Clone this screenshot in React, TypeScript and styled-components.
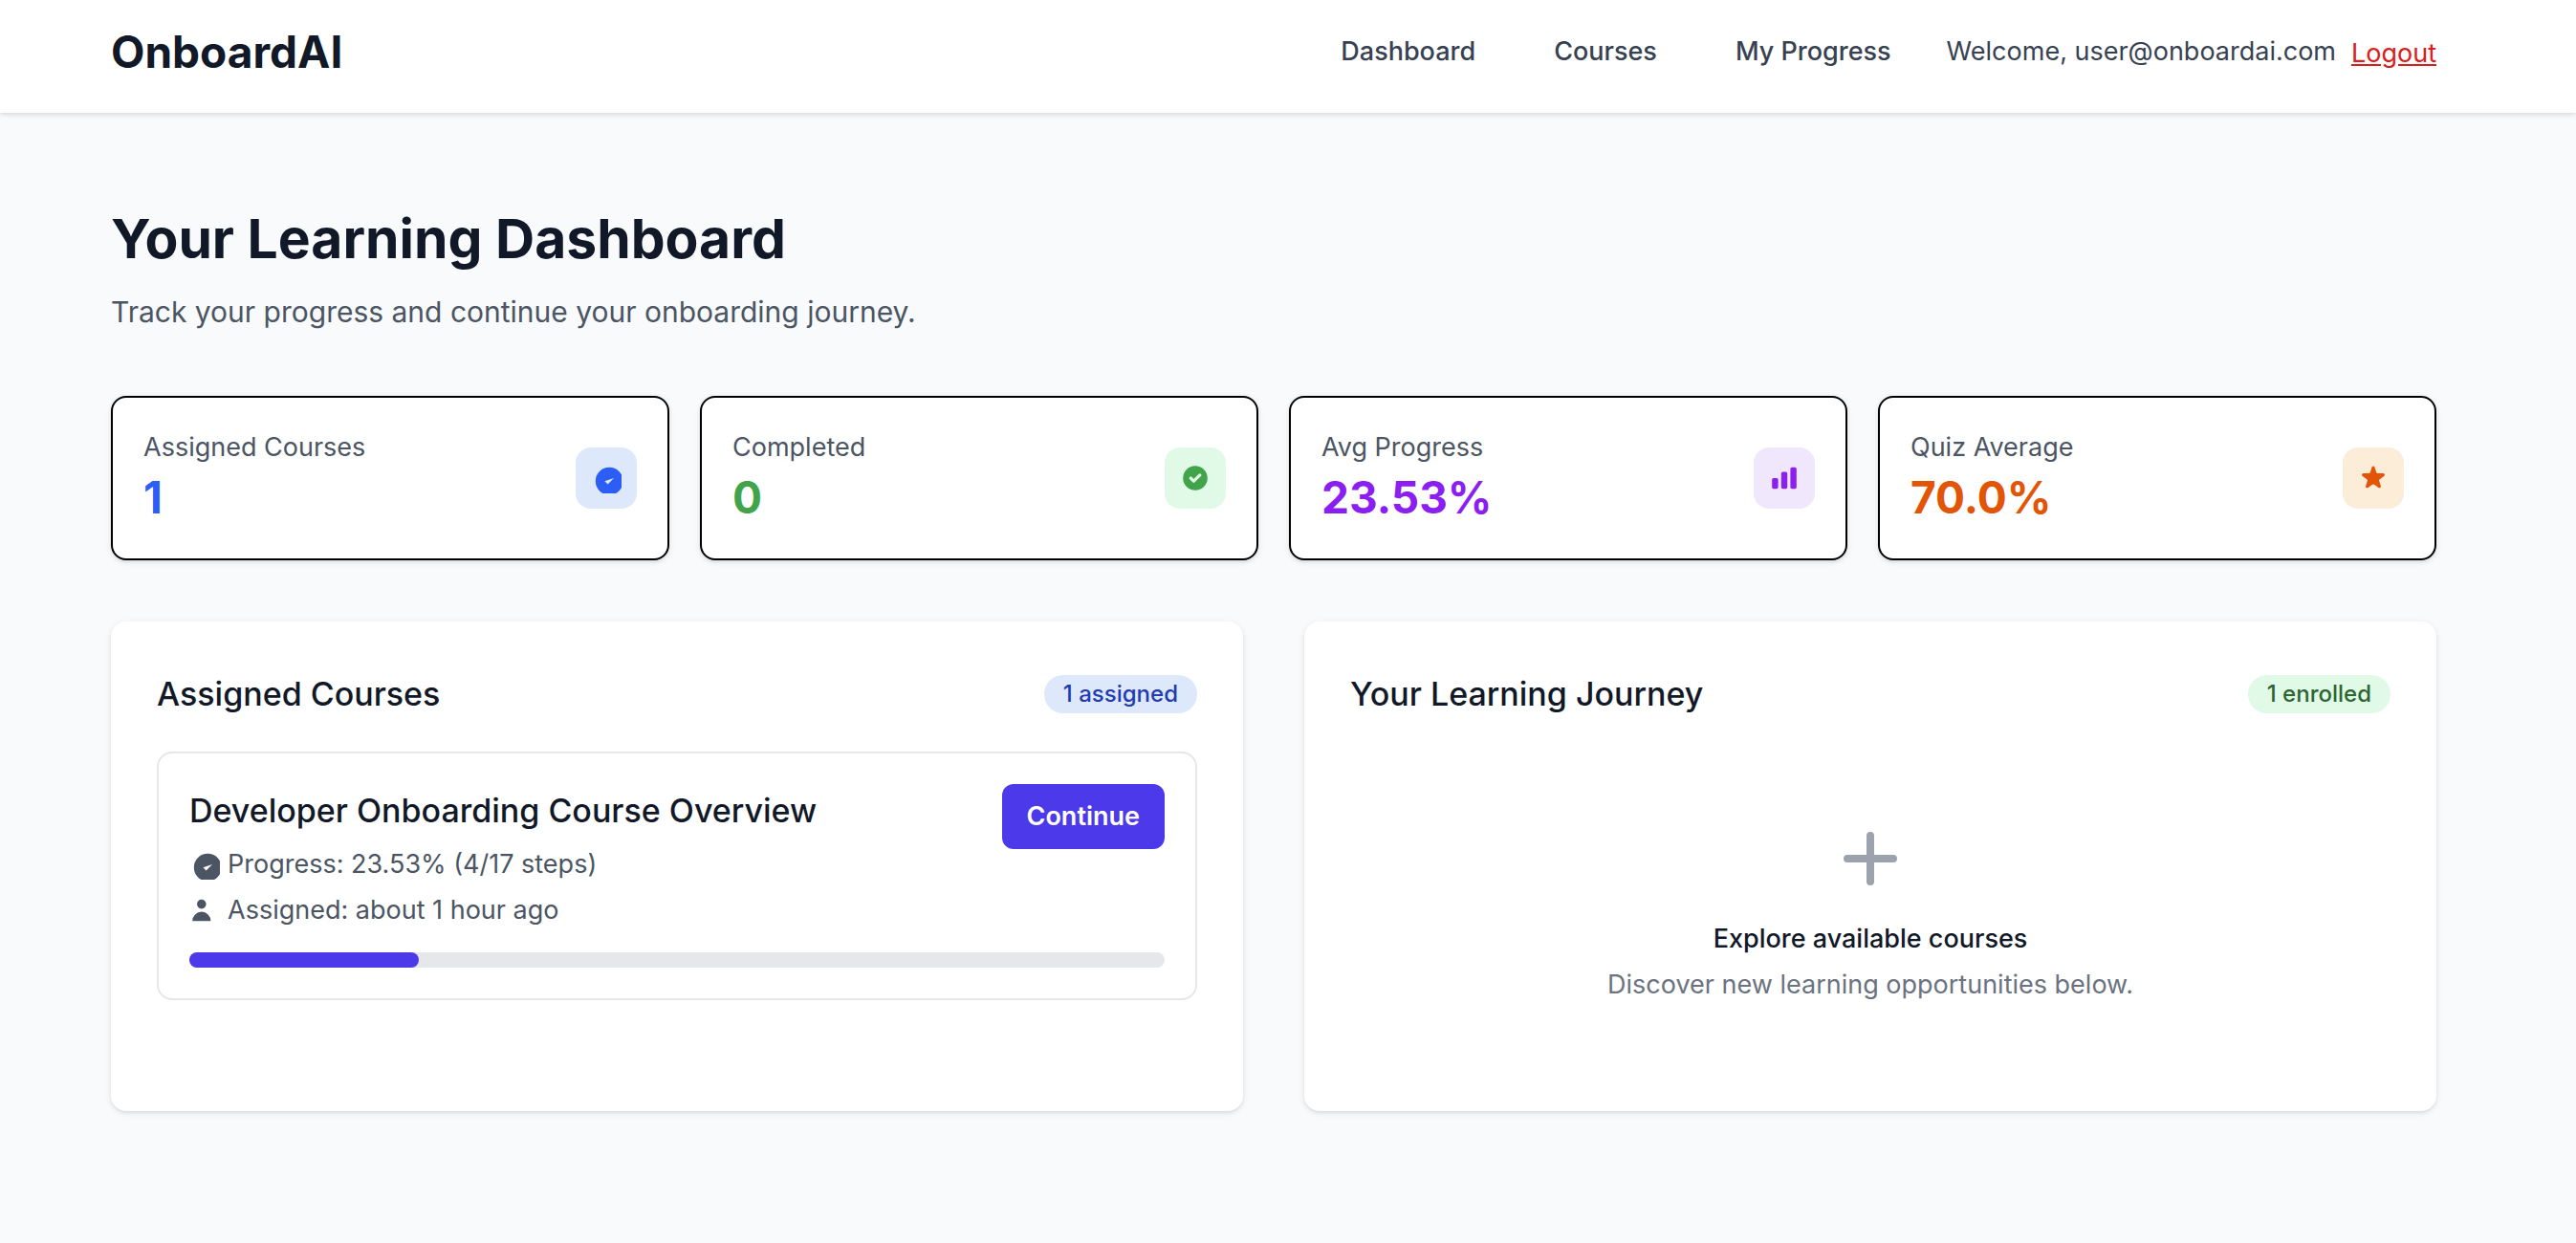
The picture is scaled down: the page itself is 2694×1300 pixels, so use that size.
import React from "react";
import styled, { createGlobalStyle } from "styled-components";

const font = `Inter, "Noto Sans", "Liberation Sans", sans-serif`;

const GlobalStyle = createGlobalStyle`
  *, *::before, *::after { box-sizing: border-box; }
  body {
    margin: 0;
    background: #f9fafc;
    color: #111827;
    font-family: ${font};
    font-size: 27px;
    line-height: 40px;
  }
  h1, h2, h3, p { margin: 0; }
  svg { display: block; flex-shrink: 0; }
`;

const Page = styled.div`
  min-height: 100vh;
`;

const Header = styled.header`
  background: #ffffff;
  padding: 22px 30px 32px 0;
  box-shadow: 0 2px 6px rgba(0, 0, 0, 0.1), 0 2px 4px -2px rgba(0, 0, 0, 0.1);
`;

const Container = styled.div`
  max-width: 2560px;
  margin: 0 auto;
  padding: 0 64px;
`;

const HeaderRow = styled(Container)`
  display: flex;
  align-items: center;
  justify-content: space-between;
`;

const Logo = styled.a`
  color: #111827;
  font-size: 46px;
  font-weight: 700;
  line-height: 64px;
  text-decoration: none;
`;

const HeaderRight = styled.div`
  display: flex;
  align-items: center;
`;

const Nav = styled.nav`
  display: flex;
  gap: 82px;
  margin-right: 58px;
`;

const NavLink = styled.a`
  color: #374151;
  font-weight: 500;
  text-decoration: none;
`;

const Welcome = styled.span`
  color: #374151;
`;

const Logout = styled.button`
  margin: 4px 0 0 16px;
  padding: 0;
  border: 0;
  background: none;
  color: #d8201c;
  font: inherit;
  text-decoration: underline;
  cursor: pointer;
`;

const Main = styled.main`
  padding: 96px 30px 96px 0;
`;

const Title = styled.h1`
  font-size: 57px;
  font-weight: 700;
  line-height: 72px;
`;

const Subtitle = styled.p`
  margin-top: 16px;
  color: #4b5563;
  font-size: 30px;
  line-height: 48px;
`;

const Stats = styled.section`
  display: grid;
  grid-template-columns: repeat(4, 1fr);
  gap: 32px;
  margin-top: 64px;
`;

const StatCard = styled.div`
  display: flex;
  align-items: center;
  justify-content: space-between;
  padding: 32px;
  border: 2px solid #000000;
  border-radius: 16px;
  background: #ffffff;
  box-shadow: 0 2px 6px rgba(0, 0, 0, 0.1), 0 2px 4px -2px rgba(0, 0, 0, 0.1);
`;

const StatLabel = styled.p`
  color: #4b5563;
`;

const StatValue = styled.p<{ $color: string }>`
  color: ${(p) => p.$color};
  font-size: 46px;
  font-weight: 700;
  line-height: 64px;
`;

const IconTile = styled.div<{ $color: string; $tint: string }>`
  padding: 16px;
  border-radius: 16px;
  background: ${(p) => p.$tint};
  color: ${(p) => p.$color};
`;

const Panels = styled.div`
  display: grid;
  grid-template-columns: repeat(2, 1fr);
  gap: 64px;
  margin-top: 64px;
`;

const Panel = styled.section`
  padding: 48px;
  border-radius: 16px;
  background: #ffffff;
  box-shadow: 0 2px 6px rgba(0, 0, 0, 0.1), 0 2px 4px -2px rgba(0, 0, 0, 0.1);
`;

const PanelHeader = styled.div`
  display: flex;
  align-items: center;
  justify-content: space-between;
  margin-bottom: 32px;
`;

const PanelTitle = styled.h2`
  font-size: 34px;
  font-weight: 500;
  line-height: 56px;
`;

const Badge = styled.span<{ $color: string; $tint: string }>`
  padding: 4px 20px;
  border-radius: 20px;
  background: ${(p) => p.$tint};
  color: ${(p) => p.$color};
  font-size: 24px;
  font-weight: 500;
  line-height: 32px;
`;

const CourseCard = styled.article`
  padding: 32px;
  border: 2px solid #e5e7eb;
  border-radius: 16px;
`;

const CourseTop = styled.div`
  display: flex;
  align-items: flex-start;
  justify-content: space-between;
`;

const CourseTitle = styled.h3`
  font-size: 34px;
  font-weight: 500;
  line-height: 56px;
`;

const Meta = styled.p`
  display: flex;
  align-items: center;
  gap: 8px;
  margin-top: 8px;
  color: #4b5563;
`;

const ContinueButton = styled.button`
  padding: 14px 26px;
  border: 0;
  border-radius: 12px;
  background: #4b39ea;
  color: #ffffff;
  font: inherit;
  font-weight: 600;
  cursor: pointer;
`;

const Track = styled.div`
  height: 16px;
  margin-top: 24px;
  border-radius: 8px;
  background: #e5e7eb;
`;

const Fill = styled.div`
  height: 100%;
  border-radius: 8px;
  background: #4b39ea;
`;

const Empty = styled.div`
  display: flex;
  flex-direction: column;
  align-items: center;
  padding: 64px 0;
  color: #9ca3af;
`;

const EmptyTitle = styled.h3`
  margin-top: 16px;
  color: #111827;
  font-size: 27px;
  font-weight: 500;
`;

const EmptyText = styled.p`
  margin-top: 8px;
  color: #6b7280;
`;

const icons = {
  badge: "M9 12l2 2 4-4m6 2a9 9 0 11-18 0 9 9 0 0118 0z",
  check:
    "M10 18a8 8 0 100-16 8 8 0 000 16zm3.707-9.293a1 1 0 00-1.414-1.414L9 10.586 7.707 9.293a1 1 0 00-1.414 1.414l2 2a1 1 0 001.414 0l4-4z",
  bars: "M2 11a1 1 0 011-1h2a1 1 0 011 1v5a1 1 0 01-1 1H3a1 1 0 01-1-1v-5zM8 7a1 1 0 011-1h2a1 1 0 011 1v9a1 1 0 01-1 1H9a1 1 0 01-1-1V7zM14 4a1 1 0 011-1h2a1 1 0 011 1v12a1 1 0 01-1 1h-2a1 1 0 01-1-1V4z",
  star: "M9.049 2.927c.3-.921 1.603-.921 1.902 0l1.07 3.292a1 1 0 00.95.69h3.462c.969 0 1.371 1.24.588 1.81l-2.8 2.034a1 1 0 00-.364 1.118l1.07 3.292c.3.921-.755 1.688-1.54 1.118l-2.8-2.034a1 1 0 00-1.175 0l-2.8 2.034c-.784.57-1.838-.197-1.539-1.118l1.07-3.292a1 1 0 00-.364-1.118L2.98 8.72c-.783-.57-.38-1.81.588-1.81h3.461a1 1 0 00.951-.69l1.07-3.292z",
  user: "M8 9a3 3 0 100-6 3 3 0 000 6zM8 11a6 6 0 016 6H2a6 6 0 016-6z",
};

function Icon({ name }: { name: keyof typeof icons }) {
  return (
    <svg width="32" height="32" viewBox="0 0 20 20" fill="currentColor" aria-hidden="true">
      <path fillRule="evenodd" clipRule="evenodd" d={icons[name]} />
    </svg>
  );
}

const stats: { label: string; value: string; icon: keyof typeof icons; color: string; tint: string }[] = [
  { label: "Assigned Courses", value: "1", icon: "badge", color: "#2c5df4", tint: "#dde9fb" },
  { label: "Completed", value: "0", icon: "check", color: "#41a44b", tint: "#e0fae7" },
  { label: "Avg Progress", value: "23.53%", icon: "bars", color: "#8b1ff2", tint: "#f1e7fd" },
  { label: "Quiz Average", value: "70.0%", icon: "star", color: "#e25507", tint: "#fcedd8" },
];

const progress = 23.53;

export default function App() {
  return (
    <Page>
      <GlobalStyle />
      <Header>
        <HeaderRow>
          <Logo href="#">OnboardAI</Logo>
          <HeaderRight>
            <Nav>
              <NavLink href="#dashboard">Dashboard</NavLink>
              <NavLink href="#courses">Courses</NavLink>
              <NavLink href="#progress">My Progress</NavLink>
            </Nav>
            <Welcome>Welcome, user@onboardai.com</Welcome>
            <Logout type="button">Logout</Logout>
          </HeaderRight>
        </HeaderRow>
      </Header>
      <Main>
        <Container>
          <Title>Your Learning Dashboard</Title>
          <Subtitle>Track your progress and continue your onboarding journey.</Subtitle>
          <Stats>
            {stats.map((s) => (
              <StatCard key={s.label}>
                <div>
                  <StatLabel>{s.label}</StatLabel>
                  <StatValue $color={s.color}>{s.value}</StatValue>
                </div>
                <IconTile $color={s.color} $tint={s.tint}>
                  <Icon name={s.icon} />
                </IconTile>
              </StatCard>
            ))}
          </Stats>
          <Panels>
            <Panel>
              <PanelHeader>
                <PanelTitle>Assigned Courses</PanelTitle>
                <Badge $color="#233bb0" $tint="#dde9fb">1 assigned</Badge>
              </PanelHeader>
              <CourseCard>
                <CourseTop>
                  <div>
                    <CourseTitle>Developer Onboarding Course Overview</CourseTitle>
                    <Meta>
                      <Icon name="badge" />
                      Progress: 23.53% (4/17 steps)
                    </Meta>
                    <Meta>
                      <Icon name="user" />
                      Assigned: about 1 hour ago
                    </Meta>
                  </div>
                  <ContinueButton type="button">Continue</ContinueButton>
                </CourseTop>
                <Track>
                  <Fill style={{ width: `${progress}%` }} />
                </Track>
              </CourseCard>
            </Panel>
            <Panel>
              <PanelHeader>
                <PanelTitle>Your Learning Journey</PanelTitle>
                <Badge $color="#2d6532" $tint="#e0fae7">1 enrolled</Badge>
              </PanelHeader>
              <Empty>
                <svg width="96" height="96" viewBox="0 0 24 24" fill="none" stroke="currentColor" strokeWidth="2" strokeLinecap="round" aria-hidden="true">
                  <path d="M12 6v6m0 0v6m0-6h6m-6 0H6" />
                </svg>
                <EmptyTitle>Explore available courses</EmptyTitle>
                <EmptyText>Discover new learning opportunities below.</EmptyText>
              </Empty>
            </Panel>
          </Panels>
        </Container>
      </Main>
    </Page>
  );
}
